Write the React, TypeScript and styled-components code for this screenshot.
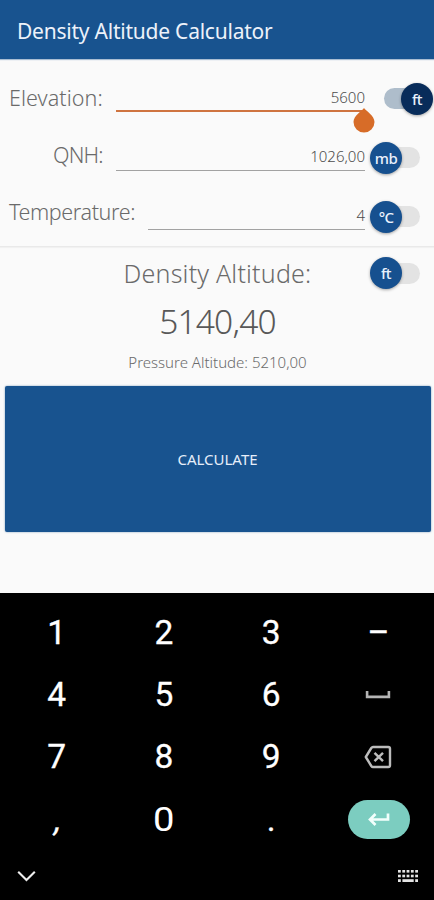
import React from "react";
import styled, { createGlobalStyle } from "styled-components";

const GlobalStyle = createGlobalStyle`
  * { box-sizing: border-box; }
  body { margin: 0; background: #fafafa; }
`;

const Screen = styled.div`
  width: 434px;
  height: 900px;
  display: flex;
  flex-direction: column;
  overflow: hidden;
  background: #fafafa;
  color: #6a6a6a;
  font-family: "Noto Sans", sans-serif;
`;

const AppBar = styled.header`
  height: 59px;
  flex: none;
  padding: 2px 18px 0 17px;
  display: flex;
  align-items: center;
  background: #18538f;
  box-shadow: 0 1px 1px #a9bdd2;
`;

const Title = styled.h1`
  margin: 0;
  font-size: 21px;
  font-weight: 400;
  letter-spacing: -0.23px;
  color: #edf2fa;
  white-space: nowrap;
`;

const Form = styled.section`
  height: 188px;
  flex: none;
  padding: 10px 14px 0 9px;
  border-bottom: 1px solid #e9e9e9;
  box-shadow: 0 1px 1px #f1f1f1;
`;

const Row = styled.div`
  height: 59px;
  display: flex;
  align-items: center;
`;

const Label = styled.label<{ $lift: number; $width: number; $spacing: number }>`
  width: ${(p) => p.$width}px;
  flex: none;
  padding-bottom: ${(p) => p.$lift * 2}px;
  text-align: left;
  font-size: 21.5px;
  line-height: 30px;
  font-weight: 300;
  letter-spacing: ${(p) => p.$spacing}px;
  white-space: nowrap;
`;

const IndentedLabel = styled(Label)`
  padding-left: 44px;
`;

const Field = styled.div<{ $active?: boolean }>`
  position: relative;
  flex: 1;
  height: 27px;
  margin: 0 19px 0 13px;
  padding-bottom: 2px;
  display: flex;
  align-items: center;
  justify-content: flex-end;
  border-bottom: ${(p) => (p.$active ? "2px solid #cf7440" : "1px solid #a2a2a2")};
  color: #4c4c4c;
  font-size: 15px;
  font-weight: 300;
`;

const Handle = styled.svg`
  position: absolute;
  right: -10px;
  top: 23px;
  width: 22px;
  height: 25px;
`;

const Track = styled.div<{ $on?: boolean }>`
  position: relative;
  width: 36px;
  height: 21px;
  flex: none;
  border-radius: 11px;
  background: ${(p) => (p.$on ? "#aebdcb" : "#e3e3e3")};
`;

const Thumb = styled.span<{ $on?: boolean }>`
  position: absolute;
  top: -5.5px;
  left: ${(p) => (p.$on ? 17 : -14)}px;
  width: 32px;
  height: 32px;
  border-radius: 50%;
  display: flex;
  align-items: center;
  justify-content: center;
  background: ${(p) => (p.$on ? "#082c5a" : "#16508f")};
  box-shadow: 0 1px 3px rgba(0, 0, 0, 0.35);
  color: #e9f1fc;
  font-size: 15px;
  font-weight: 500;
  letter-spacing: -0.6px;
`;

const Results = styled.section`
  height: 139px;
  flex: none;
  position: relative;
  display: flex;
  flex-direction: column;
  align-items: center;
  white-space: nowrap;
`;

const ResultTitle = styled.div`
  margin-top: 8px;
  padding-left: 1px;
  font-size: 25px;
  line-height: 36px;
  font-weight: 300;
  letter-spacing: 0.2px;
`;

const ResultValue = styled.div`
  margin-top: 9px;
  padding-left: 1px;
  font-size: 33.5px;
  line-height: 42px;
  font-weight: 300;
  letter-spacing: -0.8px;
  color: #585858;
`;

const ResultNote = styled.div`
  margin-top: 9px;
  padding-left: 1px;
  font-size: 15px;
  line-height: 22px;
  font-weight: 300;
`;

const ResultSwitch = styled.div`
  position: absolute;
  top: 15.5px;
  right: 14px;
`;

const CalculateButton = styled.button`
  height: 146px;
  flex: none;
  margin: 0 3px 0 5px;
  padding: 0 1px 0 0;
  border: 0;
  border-radius: 2px;
  background: #18538f;
  box-shadow: 0 0 2px rgba(24, 83, 143, 0.6);
  color: #e6eefa;
  font: 400 15px "Noto Sans", sans-serif;
`;

const Keyboard = styled.section`
  height: 307px;
  flex: none;
  margin-top: auto;
  padding: 8px 2px 0 3px;
  background: #000;
  color: #fff;
`;

const Keys = styled.div`
  display: grid;
  grid-template-columns: repeat(4, 1fr);
  grid-auto-rows: 62.3px;
`;

const Key = styled.div`
  display: flex;
  align-items: center;
  justify-content: center;
  font: 400 33.5px Roboto, sans-serif;
  -webkit-text-stroke: 0.3px #fff;
`;

const ZeroKey = styled(Key)`
  transform: scaleX(1.14);
  -webkit-text-stroke: 0;
`;

const CommaKey = styled(Key)`
  padding-left: 4px;
  transform: skewX(-12deg);
`;

const EnterKey = styled.div`
  width: 62px;
  height: 39px;
  margin-left: 2px;
  border-radius: 20px;
  display: flex;
  align-items: center;
  justify-content: center;
  background: #7ccdc0;
`;

const KeyboardBar = styled.div`
  height: 50px;
  padding: 2px 13px 0 11px;
  display: flex;
  align-items: center;
  justify-content: space-between;
`;

function Switch({ unit, on }: { unit: string; on?: boolean }) {
  return (
    <Track $on={on}>
      <Thumb $on={on}>{unit}</Thumb>
    </Track>
  );
}

const SpaceIcon = () => (
  <svg width="26" height="10" viewBox="0 0 26 10" fill="none" stroke="#b4b4b4" strokeWidth="2.6">
    <path d="M2.1 2V7.9H23.9V2" />
  </svg>
);

const BackspaceIcon = () => (
  <svg width="28" height="24" viewBox="0 0 28 24" fill="none" stroke="#bcbcbc" strokeWidth="2.4">
    <path d="M9 2H24.2Q26 2 26 3.8V20.2Q26 22 24.2 22H9Q8 22 7.3 21L1.8 12L7.3 3Q8 2 9 2Z" strokeLinejoin="round" />
    <path d="M10.5 7.8L19 16.2M19 7.8L10.5 16.2" />
  </svg>
);

const EnterIcon = () => (
  <svg width="22" height="14" viewBox="0 0 22 14" fill="none" stroke="#f2fffc" strokeWidth="2.7">
    <path d="M20 1.5V7.5H2.5M7.5 2L2 7.5L7.5 13" />
  </svg>
);

const ChevronIcon = () => (
  <svg width="24" height="24" viewBox="0 0 24 24" fill="none" stroke="#eee" strokeWidth="2.1">
    <path d="M4.2 7.8L12.5 16L20.8 7.8" />
  </svg>
);

const KeyboardIcon = () => (
  <svg width="22" height="14" viewBox="0 0 22 14" fill="#e4e4e4">
    {[1, 5.7].map((y) =>
      [1, 5.3, 9.6, 13.9, 18.2].map((x) => <rect key={`${x}-${y}`} x={x} y={y} width="2.8" height="2.6" />)
    )}
    <rect x="1" y="10.2" width="2.8" height="2.8" />
    <rect x="5.4" y="10.2" width="11.3" height="2.8" />
    <rect x="18.2" y="10.2" width="2.8" height="2.8" />
  </svg>
);

export default function App() {
  return (
    <Screen>
      <GlobalStyle />
      <AppBar>
        <Title>Density Altitude Calculator</Title>
      </AppBar>
      <Form>
        <Row>
          <Label $lift={0.5} $width={94} $spacing={0.08}>Elevation:</Label>
          <Field $active>
            5600
            <Handle viewBox="0 0 22 25">
              <path d="M11 0C13 3 21.5 7.5 21.5 14A10.5 10.5 0 0 1 0.5 14C0.5 7.5 9 3 11 0Z" fill="#d76c28" />
            </Handle>
          </Field>
          <Switch unit="ft" on />
        </Row>
        <Row>
          <IndentedLabel $lift={3} $width={94} $spacing={-0.8}>QNH:</IndentedLabel>
          <Field>1026,00</Field>
          <Switch unit="mb" />
        </Row>
        <Row>
          <Label $lift={5} $width={126} $spacing={-0.38}>Temperature:</Label>
          <Field>4</Field>
          <Switch unit="°C" />
        </Row>
      </Form>
      <Results>
        <ResultTitle>Density Altitude:</ResultTitle>
        <ResultValue>5140,40</ResultValue>
        <ResultNote>Pressure Altitude: 5210,00</ResultNote>
        <ResultSwitch>
          <Switch unit="ft" />
        </ResultSwitch>
      </Results>
      <CalculateButton>CALCULATE</CalculateButton>
      <Keyboard>
        <Keys>
          <Key>1</Key>
          <Key>2</Key>
          <Key>3</Key>
          <Key>–</Key>
          <Key>4</Key>
          <Key>5</Key>
          <Key>6</Key>
          <Key><SpaceIcon /></Key>
          <Key>7</Key>
          <Key>8</Key>
          <Key>9</Key>
          <Key><BackspaceIcon /></Key>
          <CommaKey>,</CommaKey>
          <ZeroKey>0</ZeroKey>
          <Key>.</Key>
          <Key>
            <EnterKey><EnterIcon /></EnterKey>
          </Key>
        </Keys>
        <KeyboardBar>
          <ChevronIcon />
          <KeyboardIcon />
        </KeyboardBar>
      </Keyboard>
    </Screen>
  );
}
